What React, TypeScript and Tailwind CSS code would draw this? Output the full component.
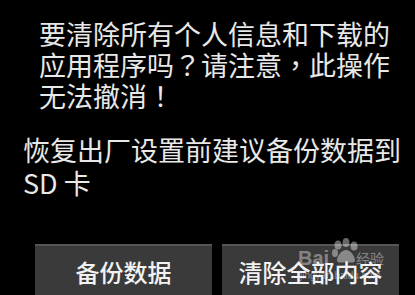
import React from "react";

const font = { fontFamily: '"Noto Sans CJK SC", "Noto Sans", sans-serif' };
const tc = { fontFamily: '"Noto Sans CJK TC", "Noto Sans CJK SC", sans-serif' };

function P({ c }: { c: string }) {
  return <span style={tc}>{c}</span>;
}

function Btn({ label }: { label: string }) {
  return (
    <div className="w-[177px] h-[60px] bg-[#3a3a3a] border-t-2 border-[#555555] flex justify-center pt-[12px] text-[24px] leading-[28px] text-[#f2f2f2] font-medium">
      {label}
    </div>
  );
}

export default function App() {
  return (
    <div className="w-[415px] h-[295px] bg-black overflow-hidden text-[#e8e8e8]" style={font}>
      <div className="pl-[39px] pr-[10px] pt-[18px] text-[27px] leading-[31px]">
        <div>要清除所有个人信息和下载的</div>
        <div>
          应用程序吗<P c="？" />请注意<P c="，" />此操作
        </div>
        <div>
          无法撤消<P c="！" />
        </div>
      </div>
      <div className="pl-[23px] pr-[6px] mt-[22px] text-[27px] leading-[33px]">
        <div>恢复出厂设置前建议备份数据到</div>
        <div>SD 卡</div>
      </div>
      <div className="relative flex gap-[10px] pl-[35px] mt-[45px]">
        <Btn label="备份数据" />
        <Btn label="清除全部内容" />
        <div className="absolute left-[296px] top-[-6px] w-[100px] h-[50px] text-white/40 pointer-events-none">
          <svg className="absolute left-[34px] top-[0px]" width="30" height="26" viewBox="0 0 30 26">
            <ellipse cx="8" cy="7" rx="3.5" ry="4.5" fill="currentColor" />
            <ellipse cx="16" cy="4.5" rx="3.5" ry="4.5" fill="currentColor" />
            <ellipse cx="24" cy="8" rx="3.5" ry="4.5" fill="currentColor" />
            <ellipse cx="5" cy="15" rx="3" ry="4" fill="currentColor" />
            <path d="M16 12c-5 0-9 7-9 10s3 3 9 2c6 1 9 1 9-2s-4-10-9-10z" fill="currentColor" />
          </svg>
          <div className="absolute left-[2px] top-[10px] text-[20px] leading-[20px] font-bold" style={{ fontFamily: '"Liberation Sans", sans-serif' }}>Bai</div>
          <div className="absolute left-[60px] top-[13px] text-[14px] leading-[14px]">经验</div>
          <div className="absolute left-[4px] top-[33px] text-[10px] leading-[10px]" style={{ fontFamily: '"Liberation Sans", sans-serif' }}>jingyan.baidu.com</div>
        </div>
      </div>
    </div>
  );
}
